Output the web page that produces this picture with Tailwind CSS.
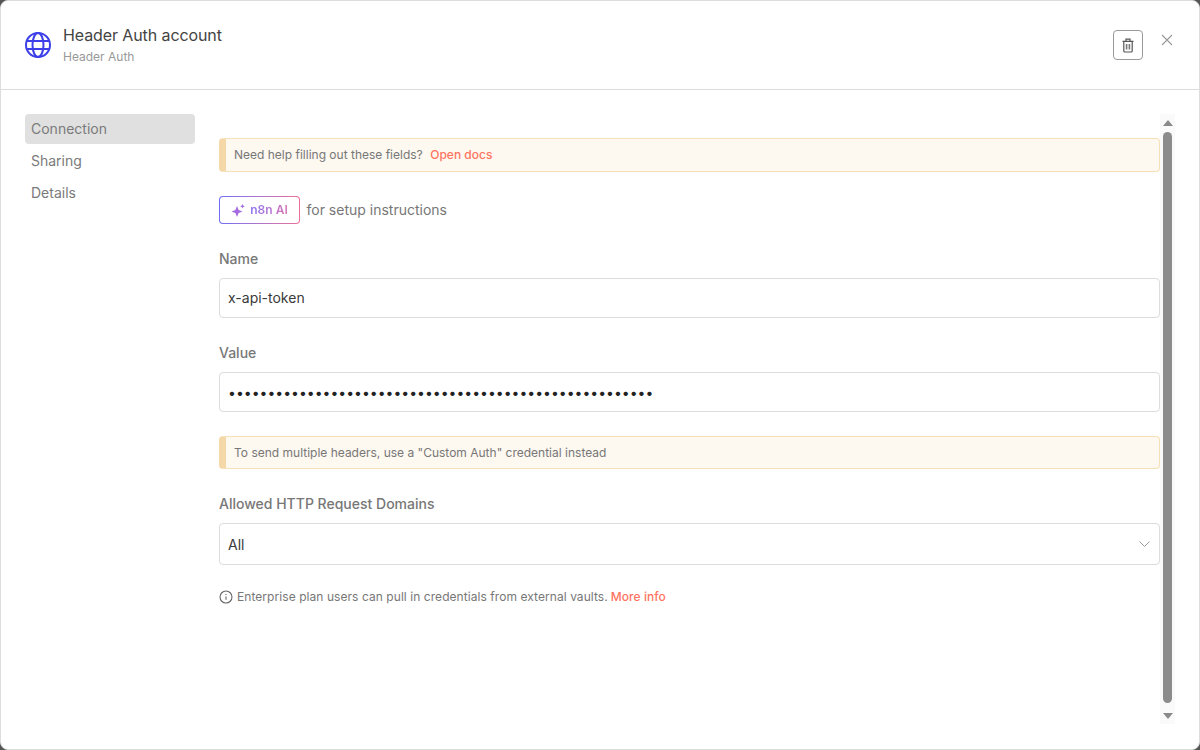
<!DOCTYPE html>
<html lang="en">

<head>
    <meta charset="UTF-8" />
    <title>Header Auth account</title>
    <script src="https://cdn.jsdelivr.net/npm/@tailwindcss/browser@4"></script>
</head>

<body class="bg-[#555] w-[1200px] h-[750px] overflow-hidden font-['Inter',sans-serif]">
    <div class="w-[1200px] h-[750px] bg-white border border-[#dcdcdc] rounded-lg flex flex-col">

        <!-- header -->
        <div class="h-[89px] shrink-0 border-b border-[#dcdcdc] flex items-start pl-[24px] pr-[26px]">
            <svg class="mt-[30px] w-[26px] h-[28px]" viewBox="0 0 26 28" fill="none" stroke="#3d3fe8" stroke-width="2">
                <circle cx="13" cy="14" r="12" />
                <ellipse cx="13" cy="14" rx="5.5" ry="12" />
                <path d="M1.8 10h22.4M1.8 18h22.4" />
            </svg>
            <div class="ml-[12px] mt-[23px]">
                <div class="text-[16px] leading-[22px] tracking-[-0.1px] text-[#444]">Header Auth account</div>
                <div class="text-[12px] leading-[16px] mt-[3px] text-[#999]">Header Auth</div>
            </div>
            <div class="ml-auto mt-[29px] w-[30px] h-[30px] border border-[#999] rounded flex items-center justify-center">
                <svg class="w-[14px] h-[15px]" viewBox="0 0 14 15" fill="none" stroke="#555" stroke-width="1.2">
                    <path d="M1.5 3.4h11M5 3.2V1.2h4v2M2.8 3.4v9.6a1 1 0 0 0 1 1h6.4a1 1 0 0 0 1-1V3.4" />
                    <path d="M5.6 6v5.4M8.4 6v5.4" stroke-width="1.6" stroke="#777" />
                </svg>
            </div>
            <svg class="ml-[18px] mt-[33px] w-[12px] h-[12px]" viewBox="0 0 12 12" fill="none" stroke="#999" stroke-width="1.1">
                <path d="M1 1l10 10M11 1L1 11" />
            </svg>
        </div>

        <div class="flex flex-1 min-h-0 pt-[24px] pl-[24px]">
            <!-- sidebar -->
            <div class="w-[170px] shrink-0 text-[14px] text-[#7a7a7a] flex flex-col gap-[2px]">
                <div class="h-[30px] leading-[30px] px-[6px] rounded bg-[#e0e0e0]">Connection</div>
                <div class="h-[30px] leading-[30px] px-[6px]">Sharing</div>
                <div class="h-[30px] leading-[30px] px-[6px]">Details</div>
            </div>

            <!-- content -->
            <div class="w-[941px] ml-[24px] shrink-0 pt-[24px]">
                <div class="h-[34px] bg-[#fdf8f0] border border-[#f6e0b8] border-l-[7px] border-l-[#f5d8a8] rounded-sm flex items-center pl-[8px] text-[12px] text-[#777]">
                    Need help filling out these fields?
                    <span class="ml-[7.5px] text-[#ff7460] font-medium">Open docs</span>
                </div>

                <div class="mt-[24px] flex items-center text-[14px] text-[#777]">
                    <div class="h-[28px] w-[81px] p-px rounded bg-linear-to-r from-[#6f6df5] to-[#ea6f9a]">
                        <div class="h-full bg-white rounded-[3px] flex items-center justify-center gap-[4px]">
                            <svg class="w-[15px] h-[15px]" viewBox="0 0 15 15" fill="#a56ae0">
                                <path d="M6 3l1.6 3.9L11.5 8.5 7.6 10.1 6 14l-1.6-3.9L.5 8.5l3.9-1.6z" />
                                <path d="M11.5 1l.7 1.6 1.6.7-1.6.7-.7 1.6-.7-1.6-1.6-.7 1.6-.7z" />
                            </svg>
                            <span class="text-[12px] font-semibold bg-linear-to-r from-[#8a72f0] to-[#d872b4] bg-clip-text text-transparent">n8n AI</span>
                        </div>
                    </div>
                    <span class="ml-[6.5px] -translate-y-px">for setup instructions</span>
                </div>

                <div class="mt-[25px] text-[14px] leading-[20px] font-medium text-[#777]">Name</div>
                <div class="mt-[9px] h-[40px] border border-[#dcdcdc] rounded flex items-center px-[8px] pb-[1px] text-[14px] text-[#3a3a3a]">x-api-token</div>

                <div class="mt-[25px] text-[14px] leading-[20px] font-medium text-[#777]">Value</div>
                <div class="mt-[9px] h-[40px] border border-[#dcdcdc] rounded flex items-center px-[8px] text-[14px] text-[#222]">••••••••••••••••••••••••••••••••••••••••••••••••••••••</div>

                <div class="mt-[24px] h-[33px] bg-[#fdf8f0] border border-[#f6e0b8] border-l-[7px] border-l-[#f5d8a8] rounded-sm flex items-center pl-[8px] text-[12px] text-[#777]">
                    To send multiple headers, use a "Custom Auth" credential instead
                </div>

                <div class="mt-[25px] text-[14px] leading-[20px] font-medium text-[#777]">Allowed HTTP Request Domains</div>
                <div class="mt-[9px] h-[42px] border border-[#dcdcdc] rounded flex items-center justify-between pl-[8px] pr-[9px] text-[14px] text-[#3a3a3a]">
                    All
                    <svg class="w-[11px] h-[6px]" viewBox="0 0 11 6" fill="none" stroke="#999" stroke-width="1">
                        <path d="M.5.5l5 5 5-5" />
                    </svg>
                </div>

                <div class="mt-[24px] flex items-center text-[12px] leading-[16px] tracking-[0.06px] text-[#777]">
                    <svg class="w-[14px] h-[14px] mr-[4px]" viewBox="0 0 14 14" fill="none" stroke="#666" stroke-width="1.1">
                        <circle cx="7" cy="7" r="6" />
                        <path d="M7 6.4v3.4M7 4v1" />
                    </svg>
                    Enterprise plan users can pull in credentials from external vaults.
                    <span class="ml-[3px] text-[#ff7460] font-medium">More info</span>
                </div>
            </div>

            <!-- scrollbar -->
            <div class="w-[15px] h-[610px] shrink-0 bg-[#fafafa] flex flex-col items-center">
                <div class="mt-[6px] w-0 h-0 border-x-[5px] border-x-transparent border-b-[6px] border-b-[#8a8a8a]"></div>
                <div class="mt-[6px] w-[9px] h-[571px] rounded-full bg-[#8c8c8c]"></div>
                <div class="mt-[10px] w-0 h-0 border-x-[5px] border-x-transparent border-t-[6px] border-t-[#8a8a8a]"></div>
            </div>
        </div>
    </div>
</body>

</html>
